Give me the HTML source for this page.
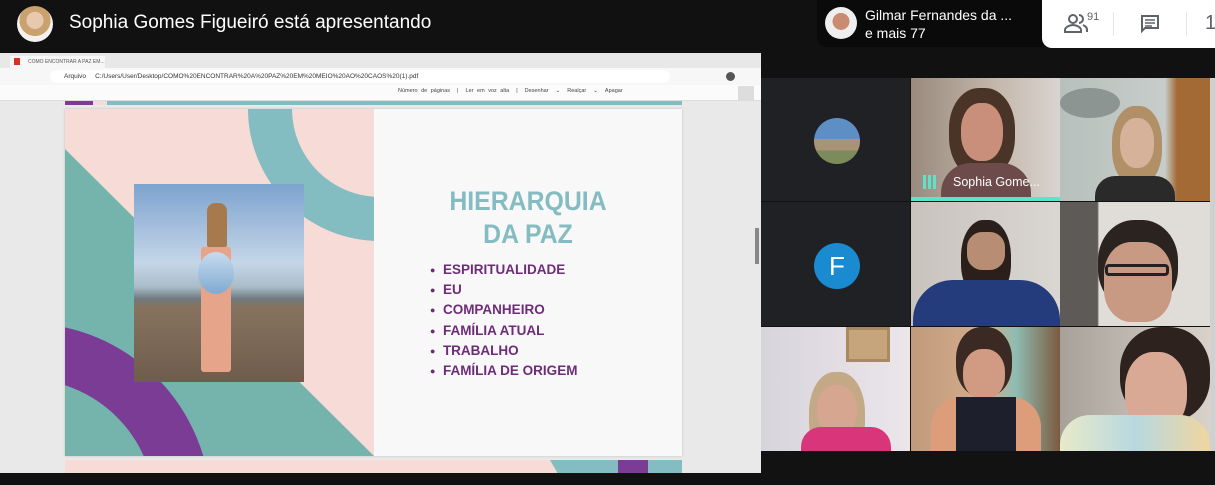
<!DOCTYPE html>
<html><head><meta charset="utf-8"><style>
*{margin:0;padding:0;box-sizing:border-box}
html,body{width:1215px;height:485px;overflow:hidden}
body{background:#111;font-family:"Liberation Sans",Arial,sans-serif;position:relative}
.a{position:absolute}
.t{color:#fff}
.tile{position:absolute;overflow:hidden}
.b{font-size:9px;line-height:1;vertical-align:1px}
</style></head><body>
<div class="a" style="left:0;top:0;width:1215px;height:53px;background:#111"></div>
<div class="a" style="left:17px;top:6px;width:36px;height:36px;border-radius:50%;background:radial-gradient(circle at 50% 40%,#e8c9b0 0 30%,#c9a26e 31% 55%,#f4f1ee 56%)"></div>
<div class="a t" style="left:69px;top:12px;font-size:19px">Sophia Gomes Figueiró está apresentando</div>
<div class="a" style="left:817px;top:0;width:230px;height:47px;background:#0a0a0a;border-radius:0 0 0 10px"></div>
<div class="a" style="left:825px;top:7px;width:32px;height:32px;border-radius:50%;background:radial-gradient(circle at 50% 45%,#c98b72 0 35%,#eee 36%)"></div>
<div class="a t" style="left:865px;top:7px;font-size:14px">Gilmar Fernandes da ...</div>
<div class="a t" style="left:865px;top:25px;font-size:14px">e mais 77</div>
<div class="a" style="left:1042px;top:0;width:173px;height:48px;background:#fff;border-radius:0 0 0 10px"></div>
<svg class="a" style="left:1064px;top:13px" width="26" height="22" viewBox="0 0 26 22"><circle cx="9" cy="6" r="4" fill="none" stroke="#5f6368" stroke-width="2"/><path d="M1 19v-2c0-3 5-5 8-5s8 2 8 5v2z" fill="none" stroke="#5f6368" stroke-width="2"/><path d="M15 2a4 4 0 0 1 0 8M19 12c2 1 4 2 4 5v2" fill="none" stroke="#5f6368" stroke-width="2"/></svg>
<div class="a" style="left:1087px;top:11px;font-size:11px;color:#5f6368">91</div>
<div class="a" style="left:1113px;top:12px;width:1px;height:24px;background:#e6e6e6"></div>
<svg class="a" style="left:1140px;top:14px" width="20" height="20" viewBox="0 0 20 20"><path d="M2 2h16v12H5l-3 3z" fill="none" stroke="#5f6368" stroke-width="2"/><path d="M5 6h10M5 9h10M5 12h7" stroke="#5f6368" stroke-width="1.5"/></svg>
<div class="a" style="left:1186px;top:12px;width:1px;height:24px;background:#e6e6e6"></div>
<div class="a" style="left:1205px;top:12px;font-size:20px;color:#5f6368">1</div>
<div class="a" style="left:0;top:53px;width:761px;height:420px;background:#e9e9e9"></div>
<div class="a" style="left:0;top:53px;width:761px;height:15px;background:#e8e8e8"></div>
<div class="a" style="left:10px;top:56px;width:95px;height:12px;background:#f7f7f7;font-size:5px;color:#555;padding:3px 0 0 18px;white-space:nowrap;overflow:hidden">COMO ENCONTRAR A PAZ EM...  x</div>
<div class="a" style="left:14px;top:58px;width:6px;height:7px;background:#d93025"></div>
<div class="a" style="left:0;top:68px;width:761px;height:17px;background:#f7f7f7"></div>
<div class="a" style="left:50px;top:70px;width:620px;height:13px;background:#fff;border-radius:7px;font-size:6.5px;color:#333;padding:3px 0 0 14px;white-space:nowrap;overflow:hidden">Arquivo &nbsp; &nbsp; C:/Users/User/Desktop/COMO%20ENCONTRAR%20A%20PAZ%20EM%20MEIO%20AO%20CAOS%20(1).pdf</div>
<div class="a" style="left:726px;top:72px;width:9px;height:9px;border-radius:50%;background:#555"></div>
<div class="a" style="left:0;top:85px;width:761px;height:16px;background:#fbfbfb;border-bottom:1px solid #ddd"></div>
<div class="a" style="left:398px;top:88px;font-size:5.5px;color:#444;white-space:nowrap;word-spacing:2px">Número de páginas &nbsp;| &nbsp;Ler em voz alta &nbsp;| &nbsp;Desenhar &nbsp;⌄ &nbsp;Realçar &nbsp;⌄ &nbsp;Apagar</div>
<div class="a" style="left:738px;top:86px;width:16px;height:14px;background:#ddd"></div>
<div class="a" style="left:755px;top:228px;width:4px;height:36px;background:#888"></div>
<div class="a" style="left:65px;top:101px;width:617px;height:4px;background:#83bcc1"></div>
<div class="a" style="left:65px;top:101px;width:28px;height:4px;background:#7b3c95"></div>
<div class="a" style="left:93px;top:101px;width:14px;height:4px;background:#f5dcd6"></div>
<div class="a" style="left:65px;top:109px;width:617px;height:347px;background:#f8f8f9;box-shadow:0 0 2px #bbb;overflow:hidden">
 <div class="a" style="left:0;top:0;width:309px;height:347px;background:#f6dbd7;overflow:hidden">
  <svg class="a" style="left:0;top:0" width="309" height="347" viewBox="0 0 309 347">
   <polygon points="0,40 309,347 0,347" fill="#74b4ad"/>
   <circle cx="315" cy="0" r="132" fill="#83bcc1"/>
   <circle cx="315" cy="0" r="88" fill="#f6dbd7"/>
   <circle cx="-40" cy="400" r="186" fill="#7b3c95"/>
   <circle cx="-40" cy="400" r="130" fill="#74b4ad"/>
  </svg>
 </div>
 <div class="a" style="left:69px;top:75px;width:170px;height:198px;background:linear-gradient(#7da3cf 0%,#c5d6e8 40%,#a9bcc8 52%,#6f7a80 58%,#86735f 62%,#6f5c4c 100%)"></div>
 <div class="a" style="left:142px;top:94px;width:20px;height:44px;background:#a67a4d;border-radius:8px 8px 2px 2px"></div>
 <div class="a" style="left:136px;top:138px;width:30px;height:125px;background:#e6a58a;border-radius:3px"></div>
 <div class="a" style="left:133px;top:143px;width:36px;height:42px;border-radius:50%;background:linear-gradient(#c7dcef,#7faad0)"></div>
 <div class="a" style="left:309px;top:76px;width:308px;text-align:center;color:#85bcc1;font-size:27px;line-height:33px;font-weight:bold;transform:scaleX(0.92)">HIERARQUIA<br>DA PAZ</div>
 <div class="a" style="left:365px;top:151px;color:#6e2c78;font-size:13.5px;line-height:20.2px;font-weight:bold;white-space:nowrap">
  <span class="b">●</span>&nbsp; ESPIRITUALIDADE<br><span class="b">●</span>&nbsp; EU<br><span class="b">●</span>&nbsp; COMPANHEIRO<br><span class="b">●</span>&nbsp; FAMÍLIA ATUAL<br><span class="b">●</span>&nbsp; TRABALHO<br><span class="b">●</span>&nbsp; FAMÍLIA DE ORIGEM
 </div>
</div>
<div class="a" style="left:65px;top:460px;width:617px;height:13px;background:#f6dbd7;overflow:hidden">
 <div class="a" style="left:470px;top:0;width:150px;height:13px;background:#83bcc1;clip-path:polygon(10% 0,100% 0,100% 100%,15% 100%)"></div>
 <div class="a" style="left:553px;top:0;width:30px;height:13px;background:#7b3c95"></div>
</div>
<div class="a" style="left:761px;top:48px;width:454px;height:30px;background:#111"></div>
<div class="tile" style="left:761px;top:78px;width:149px;height:123px;background:#202124">
 <div class="a" style="left:53px;top:40px;width:46px;height:46px;border-radius:50%;background:linear-gradient(#5e8fc4 0 45%,#a99377 46% 70%,#7d8a5c 71%)"></div>
</div>
<div class="tile" style="left:911px;top:78px;width:149px;height:123px;background:linear-gradient(90deg,#9a8a7e,#c6b9ad 60%,#d8d4d0)">
 <div class="a" style="left:38px;top:10px;width:66px;height:90px;border-radius:45%;background:#4a3428"></div>
 <div class="a" style="left:50px;top:25px;width:42px;height:58px;border-radius:45%;background:#c98f7a"></div>
 <div class="a" style="left:30px;top:85px;width:90px;height:40px;border-radius:30px 30px 0 0;background:#6d4b4b"></div>
 <div class="a t" style="left:42px;top:97px;font-size:12.5px">Sophia Gome...</div>
 <div class="a" style="left:12px;top:97px;width:15px;height:14px;background:repeating-linear-gradient(90deg,#5de3c9 0 3px,transparent 3px 5px)"></div>
 <div class="a" style="left:0;top:119px;width:149px;height:4px;background:#5de3c9"></div>
</div>
<div class="tile" style="left:1060px;top:78px;width:150px;height:123px;background:linear-gradient(90deg,#b7c0bc,#c7cdca 70%,#a36a35 78%)">
 <div class="a" style="left:0;top:10px;width:60px;height:30px;border-radius:50%;background:#8d9593"></div>
 <div class="a" style="left:52px;top:28px;width:50px;height:80px;border-radius:45%;background:#b29067"></div>
 <div class="a" style="left:60px;top:40px;width:34px;height:50px;border-radius:45%;background:#d6b29a"></div>
 <div class="a" style="left:35px;top:98px;width:80px;height:30px;border-radius:20px 20px 0 0;background:#2a2a2a"></div>
</div>
<div class="tile" style="left:761px;top:202px;width:149px;height:124px;background:#202124">
 <div class="a" style="left:53px;top:41px;width:46px;height:46px;border-radius:50%;background:#1a8ad1;color:#fff;font-size:26px;text-align:center;line-height:46px">F</div>
</div>
<div class="tile" style="left:911px;top:202px;width:149px;height:124px;background:linear-gradient(90deg,#c8c3bd,#dad6d2)">
 <div class="a" style="left:50px;top:18px;width:50px;height:80px;border-radius:45%;background:#2a1f1a"></div>
 <div class="a" style="left:56px;top:30px;width:38px;height:38px;border-radius:40%;background:#b78d73"></div>
 <div class="a" style="left:2px;top:78px;width:147px;height:50px;border-radius:40px 40px 0 0;background:#253c7c"></div>
</div>
<div class="tile" style="left:1060px;top:202px;width:150px;height:124px;background:linear-gradient(90deg,#5d5a57 0 25%,#e0ddd8 26%)">
 <div class="a" style="left:38px;top:18px;width:80px;height:90px;border-radius:45%;background:#2a2320"></div>
 <div class="a" style="left:44px;top:40px;width:68px;height:80px;border-radius:40%;background:#c89a84"></div>
 <div class="a" style="left:45px;top:62px;width:64px;height:12px;border:3px solid #222;border-radius:4px"></div>
</div>
<div class="tile" style="left:761px;top:327px;width:149px;height:124px;background:linear-gradient(90deg,#d8d4dc,#eae6ea)">
 <div class="a" style="left:85px;top:0;width:44px;height:35px;background:#c6a57d;border:3px solid #a88a5e"></div>
 <div class="a" style="left:48px;top:45px;width:56px;height:90px;border-radius:45%;background:#c4a987"></div>
 <div class="a" style="left:56px;top:58px;width:40px;height:50px;border-radius:45%;background:#d6a690"></div>
 <div class="a" style="left:40px;top:100px;width:90px;height:30px;border-radius:20px 20px 0 0;background:#d8357a"></div>
</div>
<div class="tile" style="left:911px;top:327px;width:149px;height:124px;background:linear-gradient(90deg,#c19a7b,#d4ad8e 50%,#8fbdb2 70%,#7c5a40)">
 <div class="a" style="left:45px;top:0;width:56px;height:70px;border-radius:45%;background:#3b2a24"></div>
 <div class="a" style="left:52px;top:22px;width:42px;height:50px;border-radius:45%;background:#d19a82"></div>
 <div class="a" style="left:20px;top:70px;width:110px;height:60px;border-radius:30px 30px 0 0;background:#dd9c7a"></div>
 <div class="a" style="left:45px;top:70px;width:60px;height:60px;background:#1d1f2d"></div>
</div>
<div class="tile" style="left:1060px;top:327px;width:150px;height:124px;background:linear-gradient(90deg,#a7a199,#d8d2cb)">
 <div class="a" style="left:60px;top:0;width:90px;height:95px;border-radius:45%;background:#2d221e"></div>
 <div class="a" style="left:65px;top:25px;width:62px;height:80px;border-radius:45%;background:#d9a996"></div>
 <div class="a" style="left:0;top:88px;width:150px;height:40px;border-radius:30px 30px 0 0;background:linear-gradient(90deg,#e8eac9,#b8d8e0,#f0d6a0)"></div>
</div>
<div class="a" style="left:1210px;top:78px;width:5px;height:373px;background:#d0d0d0"></div>
<div class="a" style="left:761px;top:451px;width:454px;height:34px;background:#121212"></div>
<div class="a" style="left:0;top:473px;width:761px;height:12px;background:#111"></div>
</body></html>
